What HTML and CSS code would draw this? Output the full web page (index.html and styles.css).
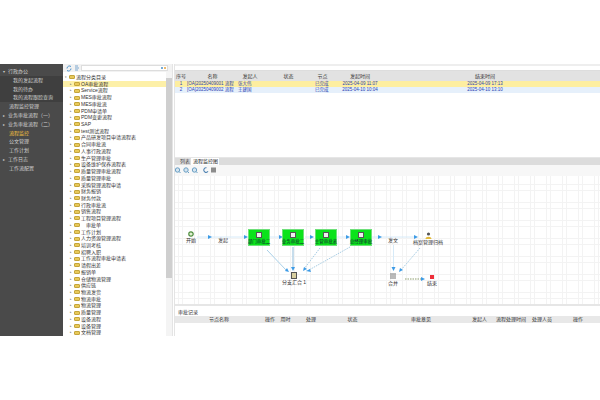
FILE: index.html
```html
<!DOCTYPE html>
<html lang="zh">
<head>
<meta charset="utf-8">
<title>流程监控</title>
<link rel="stylesheet" href="styles.css">
</head>
<body>
<div class="app">
  <nav class="side">
    <div class="m top"><i>▾</i>行政办公</div>
    <div class="subs">
      <div class="m sub">我的发起流程</div>
      <div class="m sub">我的待办</div>
      <div class="m sub">我的流程跟踪查询</div>
    </div>
    <div class="m lvl">流程监控管理</div>
    <div class="m top"><i>▸</i>业务审批流程（一）</div>
    <div class="m top"><i>▸</i>业务审批流程（二）</div>
    <div class="m lvl act">流程监控</div>
    <div class="m lvl">公文管理</div>
    <div class="m lvl">工作计划</div>
    <div class="m top"><i>▸</i>工作日志</div>
    <div class="m lvl">工作流配置</div>
  </nav>
  <section class="tree">
    <div class="search">
      <svg width="14" height="7" viewBox="0 0 14 7"><path d="M1 3.500a2.500 2.500 0 0 1 4-2M5 3.500a2.500 2.500 0 0 1-4 2" fill="none" stroke="#4a90c8"/><path d="M9 1h3M9 3h4M9 5h3" stroke="#7aa7cf"/></svg>
      <div class="input"><b class="d1"></b><b class="d2"></b></div>
    </div>
    <div class="tree-body">
      <div class="tree-list">
        <div class="root"><i class="arr">▾</i><span class="fold"></span>流程分类目录</div>
        <div class="t sel"><i class="arr">▸</i><span class="fold"></span>OA审批流程</div>
        <div class="t"><i class="arr">▸</i><span class="fold"></span>Service流程</div>
        <div class="t"><i class="arr">▸</i><span class="fold"></span>MES审批流程</div>
        <div class="t"><i class="arr">▸</i><span class="fold"></span>MES审批流</div>
        <div class="t"><i class="arr">▸</i><span class="fold"></span>PDM申请单</div>
        <div class="t"><i class="arr">▸</i><span class="fold"></span>PDM变更流程</div>
        <div class="t"><i class="arr">▸</i><span class="fold"></span>SAP</div>
        <div class="t"><i class="arr">▸</i><span class="fold"></span>test测试流程</div>
        <div class="t"><i class="arr">▸</i><span class="fold"></span>产品研发项目申请流程表</div>
        <div class="t"><i class="arr">▸</i><span class="fold"></span>合同审批流</div>
        <div class="t"><i class="arr">▸</i><span class="fold"></span>人事行政流程</div>
        <div class="t"><i class="arr">▸</i><span class="fold"></span>生产管理审批</div>
        <div class="t"><i class="arr">▸</i><span class="fold"></span>设备维护保养流程表</div>
        <div class="t"><i class="arr">▸</i><span class="fold"></span>质量管理审批流程</div>
        <div class="t"><i class="arr">▸</i><span class="fold"></span>质量管理审批</div>
        <div class="t"><i class="arr">▸</i><span class="fold"></span>采购管理流程申请</div>
        <div class="t"><i class="arr">▸</i><span class="fold"></span>财务报销</div>
        <div class="t"><i class="arr">▸</i><span class="fold"></span>财务付款</div>
        <div class="t"><i class="arr">▸</i><span class="fold"></span>行政审批流</div>
        <div class="t"><i class="arr">▸</i><span class="fold"></span>销售流程</div>
        <div class="t"><i class="arr">▸</i><span class="fold"></span>工程项目管理流程</div>
        <div class="t"><i class="arr">▸</i><span class="fold"></span>　审批单</div>
        <div class="t"><i class="arr">▸</i><span class="fold"></span>工作计划</div>
        <div class="t"><i class="arr">▸</i><span class="fold"></span>人力资源管理流程</div>
        <div class="t"><i class="arr">▸</i><span class="fold"></span>培训考核</div>
        <div class="t"><i class="arr">▸</i><span class="fold"></span>招聘入职</div>
        <div class="t"><i class="arr">▸</i><span class="fold"></span>工作流程审批申请表</div>
        <div class="t"><i class="arr">▸</i><span class="fold"></span>请假出差</div>
        <div class="t"><i class="arr">▸</i><span class="fold"></span>报销单</div>
        <div class="t"><i class="arr">▸</i><span class="fold"></span>仓储物流管理</div>
        <div class="t"><i class="arr">▸</i><span class="fold"></span>供应链</div>
        <div class="t"><i class="arr">▸</i><span class="fold"></span>物流发货</div>
        <div class="t"><i class="arr">▸</i><span class="fold"></span>物流审批</div>
        <div class="t"><i class="arr">▸</i><span class="fold"></span>物流管理</div>
        <div class="t"><i class="arr">▸</i><span class="fold"></span>质量管理</div>
        <div class="t"><i class="arr">▸</i><span class="fold"></span>设备流程</div>
        <div class="t"><i class="arr">▸</i><span class="fold"></span>设备管理</div>
        <div class="t"><i class="arr">▸</i><span class="fold"></span>文档管理</div>
      </div>
      <div class="scroll"><div class="thumb"></div></div>
    </div>
  </section>
  <main class="right">
    <div class="topbar"></div>
    <div class="grid-head cols">
      <span>序号</span><span>名称</span><span>发起人</span><span>状态</span><span>节点</span><span>发起时间</span><span class="end">结束时间</span>
    </div>
    <div class="grid-row cols y">
      <span>1</span><span class="l">[OA]20250409001 流程</span><span class="l">张大伟</span><span></span><span class="l">已完成</span><span>2025-04-09 11:07</span><span class="end">2025-04-09 17:13</span>
    </div>
    <div class="grid-row cols b">
      <span>2</span><span class="l">[OA]20250409002 流程</span><span class="l">王建国</span><span></span><span class="l">已完成</span><span>2025-04-10 10:04</span><span class="end">2025-04-10 13:10</span>
    </div>
    <div class="gap"></div>
    <div class="tabs">
      <span class="tab">列表</span><span class="tab on">流程监控图</span>
    </div>
    <div class="tools">
      <svg width="42" height="9" viewBox="0 0 42 9">
        <g fill="#d5e5f0" stroke="#6a9fc4"><circle cx="2.500" cy="4" r="2.200"/><circle cx="11" cy="4" r="2.200"/><circle cx="19.500" cy="4" r="2.200"/></g>
        <path d="M4 5.500l1.500 1.500M12.500 5.500l1.500 1.500M21 5.500l1.500 1.500" stroke="#6a9fc4"/>
        <path d="M31.500 1.800a2.300 2.300 0 1 0 1.500 3.500" fill="none" stroke="#4a7fb0" stroke-width="1.100"/>
        <rect x="36" y="1.500" width="5" height="5" fill="#8c8c8c"/>
      </svg>
    </div>
    <div class="canvas">
      <svg class="edges" width="425" height="128" viewBox="175 176 425 128">
        <g stroke="#d6eaf8" fill="none">
          <path d="M197 237H246M270 237H281M305 237H312M337 237H348M372 237H416"/>
          <path d="M393.500 245V268"/>
        </g>
        <path d="M293 247V268" stroke="#b4d2e6" stroke-width="1.500"/>
        <path d="M267 250L286 270" stroke="#a9d0e8"/>
        <g stroke="#a8cde4" stroke-dasharray="1.500 1" fill="none">
          <path d="M320 248L304 269M350 247L309 270M420 248L401 270"/>
        </g>
        <path d="M405 279H421" stroke="#8f9f6f" stroke-dasharray="1.500 1"/>
        <g fill="#3d9be6">
          <path d="M212 237l-4-2v4zM248 237l-4-2v4zM283 237l-4-2v4zM314 237l-4-2v4zM350 237l-4-2v4zM382 237l-4-2v4zM418 237l-4-2v4z"/>
          <path d="M293 271l-2-4h4zM393.500 271l-2-4h4zM289 272l-4-1 2-3zM303 271l1-4 3 2zM306 271l4-2 1 3zM399 272l1-4 3 2zM425 279l-4-2v4z"/>
        </g>
      </svg>
      <div class="node"><svg width="6" height="6" viewBox="0 0 6 6"><circle cx="3" cy="3" r="2.200" fill="#dff0d0" stroke="#4b8b3b" stroke-width="1.200"/></svg><span>开始</span></div>
      <div class="lbl l1">发起</div>
      <div class="box b1"><svg width="6" height="6" viewBox="0 0 6 6"><rect x=".5" y=".5" width="5" height="5" fill="#eee" stroke="#555"/></svg><span>部门审批二</span></div>
      <div class="box b2"><svg width="6" height="6" viewBox="0 0 6 6"><rect x=".5" y=".5" width="5" height="5" fill="#eee" stroke="#555"/></svg><span>业务审批二</span></div>
      <div class="box b3"><svg width="6" height="6" viewBox="0 0 6 6"><rect x=".5" y=".5" width="5" height="5" fill="#eee" stroke="#555"/></svg><span>主管审批表</span></div>
      <div class="box b4"><svg width="6" height="6" viewBox="0 0 6 6"><rect x=".5" y=".5" width="5" height="5" fill="#eee" stroke="#555"/></svg><span>总经理审批</span></div>
      <div class="pin p-merge"><svg width="6" height="7" viewBox="0 0 6 7"><rect x=".5" y=".5" width="5" height="6" fill="#d8cfa0" stroke="#555"/></svg><span>分支汇合 1</span></div>
      <div class="lbl l2">发文</div>
      <div class="pin p-user"><svg width="7" height="7" viewBox="0 0 7 7"><circle cx="3.500" cy="2" r="1.600" fill="#555"/><path d="M0.500 7c0-3 6-3 6 0z" fill="#e2b93b"/></svg><span>档案管理归档</span></div>
      <div class="pin p-sub"><svg width="6" height="6" viewBox="0 0 6 6"><path d="M0 1h6M0 3h6M0 5h6" stroke="#777"/></svg><span>合并</span></div>
      <div class="pin p-end"><svg width="4" height="4" viewBox="0 0 4 4"><rect width="4" height="4" fill="#ee2f3a"/></svg><span>结束</span></div>
    </div>
    <div class="foot-title">审批记录</div>
    <div class="foot-head">
      <span>节点名称</span><span>操作</span><span>用时</span><span>处理</span><span>状态</span><span>审批意见</span><span>发起人</span><span>流程处理时间</span><span>处理人员</span><span>操作</span>
    </div>
  </main>
</div>
</body>
</html>
```

FILE: styles.css
```css
* { box-sizing: border-box; }
html, body { margin: 0; height: 100%; background: #fff; }
body {
  padding-top: 64px;
  font-family: "Liberation Sans", "Noto Sans CJK SC", sans-serif;
  font-size: 5px;
  line-height: 1;
  color: #333;
  overflow: hidden;
}
i { font-style: normal; }
.app { display: flex; height: 272px; }

/* side menu */
.side { width: 63px; flex: none; background: #4a4a4a; padding-top: 3px; color: #d0d0d0; }
.m { height: 8.800px; line-height: 8.800px; white-space: nowrap; }
.m i { display: inline-block; width: 8px; padding-left: 3px; font-size: 4px; color: #ccc; }
.top { padding-left: 0; }
.lvl { padding-left: 9px; }
.subs { background: #3f3f3f; }
.sub { padding-left: 13px; }
.act { color: #f0c040; }

/* tree */
.tree { width: 110px; flex: none; display: flex; flex-direction: column; border-right: 1px solid #e4e4e4; margin-right: 1px; }
.search { height: 8px; display: flex; align-items: center; padding-left: 3px; gap: 1px; background: #f2f2f2; }
.input { flex: 1; height: 6px; margin-right: 4px; background: #fff; border: 1px solid #ddd; display: flex; justify-content: flex-end; align-items: center; gap: 1px; padding-right: 1px; }
.d1, .d2 { width: 2px; height: 2px; border-radius: 50%; }
.d1 { background: #4a90c8; }
.d2 { background: #e6a23c; }
.tree-body { flex: 1; display: flex; min-height: 0; }
.tree-list { flex: 1; padding-top: 2px; overflow: hidden; }
.root, .t { height: 6.720px; line-height: 6.720px; display: flex; align-items: center; white-space: nowrap; }
.root { padding-left: 2px; }
.t { padding-left: 7px; }
.sel { background: #fdf0a8; }
.arr { width: 4px; font-size: 3px; color: #777; flex: none; }
.fold { width: 6px; height: 4px; margin-right: 1px; flex: none; background: #e8c95a; border: 1px solid #c4a53c; border-radius: 1px; }
.scroll { width: 6px; flex: none; background: #f4f4f4; padding-top: 6px; }
.thumb { height: 200px; background: #cfcfcf; }

/* right */
.right { flex: 1; min-width: 0; display: flex; flex-direction: column; border-left: 1px solid #e4e4e4; }
.topbar { height: 7px; flex: none; background: #fff; border-top: 2px solid #eee; border-bottom: 1px solid #ddd; }
.cols { display: grid; grid-template-columns: 12px 51px 24px 53px 15px 60px 1fr; align-items: center; text-align: center; flex: none; white-space: nowrap; }
.grid-head { height: 10px; background: #e2e2e2; color: #333; }
.grid-row { height: 6px; color: #2a3fb0; font-size: 4.500px; }
.grid-row .l { text-align: left; }
.end { padding-right: 20px; }
.y { background: #fdeea0; }
.b { background: #e6f0fb; }
.gap { flex: none; height: 65px; border-bottom: 1px solid #e6e6e6; }
.tabs { flex: none; height: 7px; background: #dcdcdc; display: flex; align-items: flex-end; padding-left: 2px; }
.tab { height: 7px; line-height: 7px; padding: 0 3px; width: 14px; white-space: nowrap; }
.tab { color: #444; }
.tab.on { background: #fff; width: 28px; padding: 0 2px; color: #222; }
.tools { flex: none; height: 11px; display: flex; align-items: center; background: #f7f7f7; }

/* free canvas */
.canvas {
  position: relative;
  flex: none;
  height: 130px;
  background-color: #fff;
  background-image:
    linear-gradient(#f3f3f3 1px, transparent 1px),
    linear-gradient(#f3f3f3 1px, transparent 1px),
    linear-gradient(90deg, #f3f3f3 1px, transparent 1px),
    linear-gradient(90deg, #f3f3f3 1px, transparent 1px);
  background-size: 100% 18px, 100% 18px, 16px 100%, 16px 100%;
  background-position: 0 8px, 0 14px, 3px 0, 7px 0;
  border-bottom: 2px solid #e6e6e6;
}
.edges { position: absolute; left: 0; top: 0; }
.node, .pin, .lbl, .box {
  position: absolute;
  display: flex;
  flex-direction: column;
  align-items: center;
  white-space: nowrap;
  color: #333;
}
.node { left: 6px; top: 55px; width: 20px; gap: 1px; }
.lbl { width: 20px; top: 62px; }
.l1 { left: 38px; }
.l2 { left: 208px; }
.box { top: 53px; width: 22px; height: 17px; background: #0be31b; border: 1px solid #6fe07a; padding-top: 2px; gap: 2px; color: #123; font-size: 4.500px; }
.b1 { left: 73px; }
.b2 { left: 107px; }
.b3 { left: 140px; }
.b4 { left: 175px; }
.pin { width: 36px; gap: 1px; }
.p-merge { left: 101px; top: 96px; }
.p-user { left: 235px; top: 56px; }
.p-sub { left: 200px; top: 97px; gap: 2px; }
.p-end { left: 239px; top: 99px; gap: 2px; }

/* footer table */
.foot-title { flex: none; height: 10px; line-height: 12px; padding-left: 3px; background: #fff; }
.foot-head {
  flex: none;
  height: 7px;
  display: grid;
  grid-template-columns: 88px 14px 17px 34px 49px 88px 29px 34px 28px 1fr;
  align-items: center;
  text-align: center;
  background: #e8e8e8;
  white-space: nowrap;
}
```
